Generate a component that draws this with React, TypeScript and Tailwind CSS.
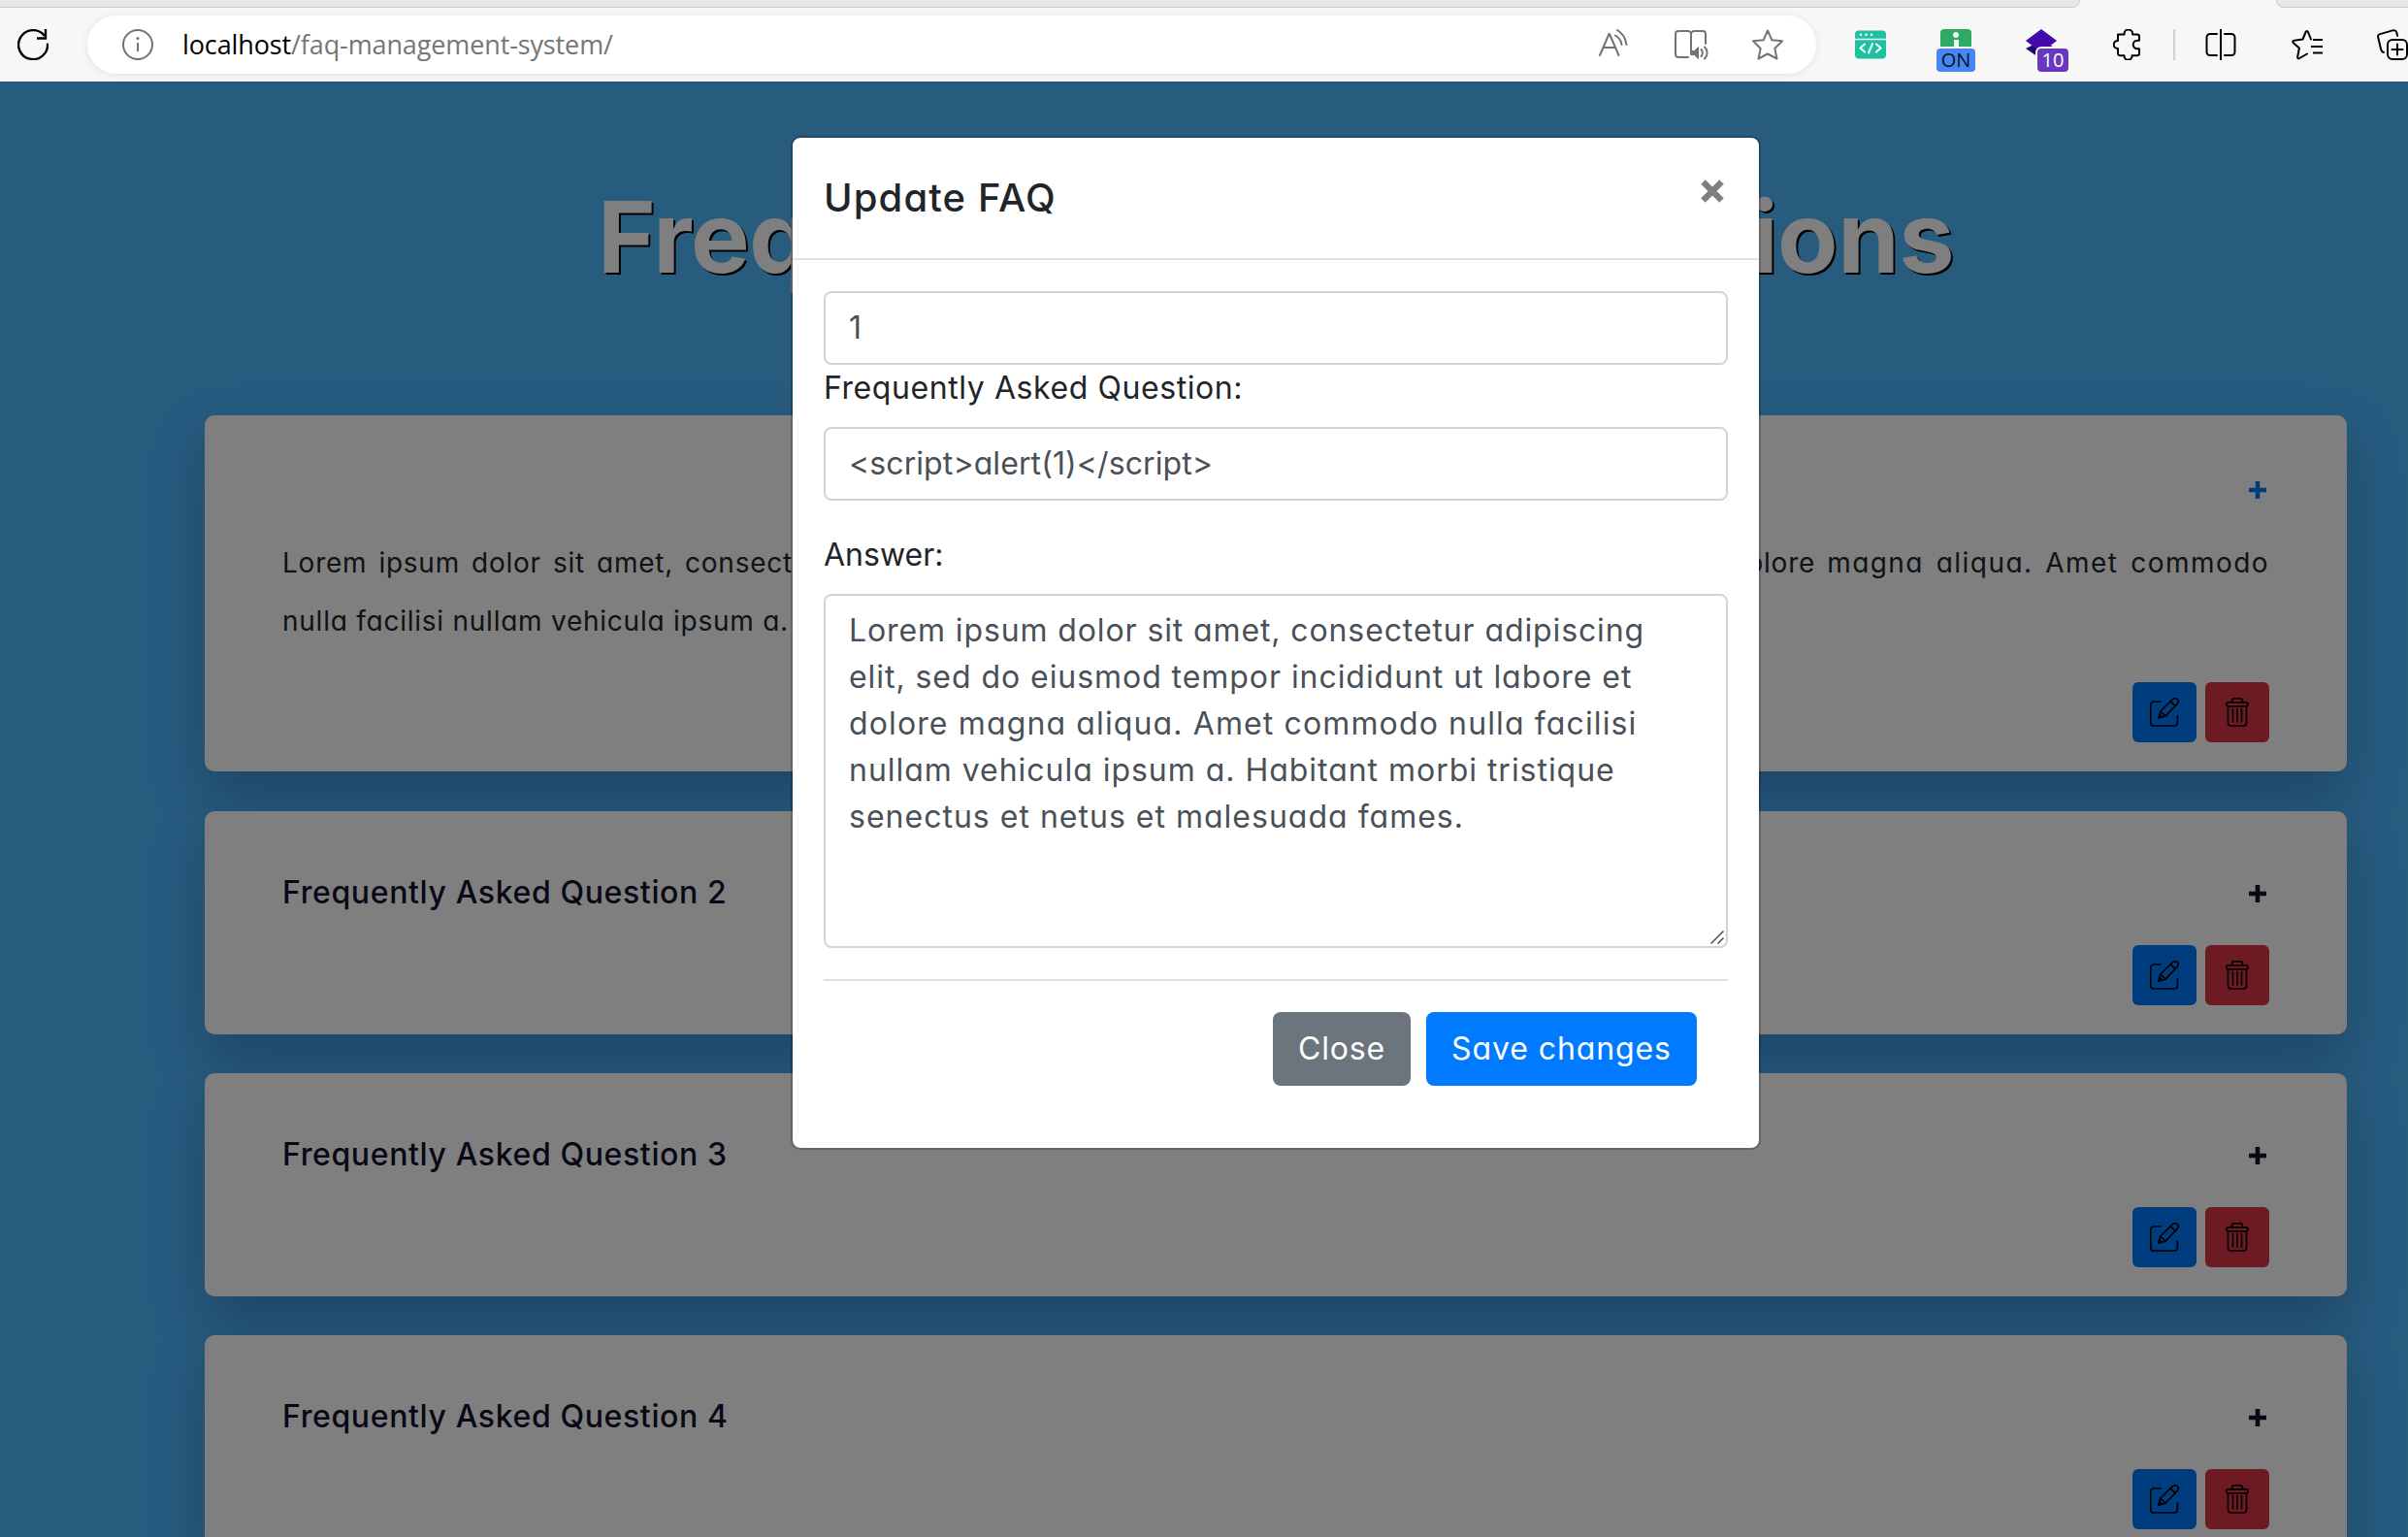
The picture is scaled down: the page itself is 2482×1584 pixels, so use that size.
import type { ReactNode } from "react";
import clsx from "clsx";

function Icon({ w, h, className, children }: { w: number; h: number; className?: string; children: ReactNode }) {
  return (
    <svg
      width={w}
      height={h}
      viewBox={`0 0 ${w} ${h}`}
      fill="none"
      stroke="currentColor"
      strokeWidth={2}
      strokeLinecap="round"
      strokeLinejoin="round"
      className={clsx("shrink-0", className)}
    >
      {children}
    </svg>
  );
}

function TabStrip() {
  return (
    <div className="flex h-2 shrink-0 bg-[#f7f7f7]">
      <div className="h-full w-[2144px] rounded-br-[8px] border-r border-b border-[#cccccc] bg-[#e8e8e8]" />
      <div className="h-full w-[202px]" />
      <div className="h-full flex-1 rounded-bl-[8px] border-b border-l border-[#cccccc] bg-[#e8e8e8]" />
    </div>
  );
}

function AddressBar() {
  return (
    <div className="ml-10 flex h-[60px] w-[1782px] shrink-0 items-center rounded-full bg-white pr-[34px] pl-9 text-[#737373] shadow-[0_1px_8px_rgba(0,0,0,0.09)]">
      <Icon w={32} h={32}>
        <circle cx="16" cy="16" r="15" />
        <path d="M16 14v9" strokeLinecap="butt" />
        <circle cx="16" cy="9.5" r="1.5" fill="currentColor" stroke="none" />
      </Icon>
      <div className="ml-[30px] font-['Open_Sans',sans-serif] text-[27px] leading-[40px] tracking-[-0.12px] whitespace-nowrap text-[#767676]">
        <span className="text-black">localhost</span>/faq-management-system/
      </div>
      <div className="ml-auto flex items-center">
        <Icon w={32} h={32}>
          <path d="M1 27 10.5 5h.5l9.500 22M5 19h12" />
          <path d="M17 6.500c3.500 2 6 5.500 6.500 9.500M19 1c5 3 8.500 8.500 9.500 15" />
        </Icon>
        <Icon w={36} h={32} className="ml-[46px]">
          <path d="M17 22V4c-1-1.300-2-2-3-2H4a3 3 0 0 0-3 3v21a3 3 0 0 0 3 3h10M17 4c1-1.300 2-2 3-2h9a3 3 0 0 1 3 3v10" />
          <path d="M17 22.500h3.500l4-4v12l-4-4H17z" fill="currentColor" strokeWidth={1} />
          <path d="M27.500 21c1.800 2 1.800 5 0 7M31 18.500c3.500 3.500 3.500 8.500 0 12" />
        </Icon>
        <Icon w={32} h={32} className="ml-11">
          <path d="M16 1.500 20.400 11.300 31 12.300 23.300 20l2.200 10.500L16 25.500l-9.500 5L8.700 20 1 12.300l10.600-1z" />
        </Icon>
      </div>
    </div>
  );
}

function BrowserBar() {
  return (
    <div className="flex h-[76px] shrink-0 items-center bg-[#f7f7f7] pl-[18px] text-black">
      <Icon w={32} h={32}>
        <path d="M31 14.500A15 15 0 1 1 28 7" strokeWidth={2.4} strokeLinecap="butt" />
        <path d="M29 0v9.500h-9" strokeWidth={2.4} strokeLinecap="butt" strokeLinejoin="miter" />
      </Icon>
      <AddressBar />
      <Icon w={32} h={30} className="ml-10">
        <rect width="32" height="29" y=".5" rx="4" fill="#1fc0a0" stroke="none" />
        <path d="M0 9.500h32" stroke="#e9f9f5" strokeWidth={1.5} />
        <g fill="#fff" stroke="none">
          <circle cx="6" cy="4.800" r="1.300" />
          <circle cx="11.500" cy="4.800" r="1.300" />
          <circle cx="17" cy="4.800" r="1.300" />
        </g>
        <path d="m10 14.500-4.500 4 4.500 4M22 14.500l4.500 4-4.500 4M18 14l-4 9.500" stroke="#fff" strokeWidth={2} />
      </Icon>
      <div className="ml-[52px] flex h-11 w-10 shrink-0 flex-col items-center self-start pt-[22px]">
        <div className="flex h-[18px] w-8 shrink-0 flex-col items-center rounded-t-[4px] bg-[#2eaa64] pt-[3px]">
          <div className="size-[6px] rounded-full bg-[#eafff2]" />
          <div className="mt-[2px] h-[7px] w-[5px] bg-[#eafff2]" />
        </div>
        <div className="mt-[2px] h-6 w-10 shrink-0 rounded-[4px] bg-[#4487f4] text-center font-['Open_Sans',sans-serif] text-[20px] leading-6 text-[#0b1020]">
          ON
        </div>
      </div>
      <div className="relative ml-[52px] h-11 w-11 shrink-0 self-start pt-[22px]">
        <Icon w={32} h={32} className="text-[#4407a8]">
          <path d="M16 12 32 20 16 31 0 20z" fill="#23056b" stroke="none" />
          <path d="M16 0 32 12 16 24 0 12z" fill="currentColor" stroke="none" />
        </Icon>
        <div className="absolute top-[40px] left-[10px] h-[28px] w-[36px] rounded-[6px] border-2 border-[#f7f7f7] bg-[#6a38c0] text-center font-['Open_Sans',sans-serif] text-[20px] leading-6 text-white">
          10
        </div>
      </div>
      <Icon w={30} h={32} className="ml-[46px]">
        <path d="M5 5.500h6.500v-.8a4.300 4.300 0 0 1 8.600 0v.8h4.700a2.200 2.200 0 0 1 2.200 2.200v4h-2a4.300 4.300 0 0 0 0 8.600h2V25a2.200 2.200 0 0 1-2.200 2.200h-5.300v.5a4 4 0 0 1-8 0v-.5H7.200A2.200 2.200 0 0 1 5 25v-5h-.3a4 4 0 0 1 0-8H5z" />
      </Icon>
      <div className="ml-8 h-8 w-[2px] shrink-0 bg-[#d1d1d1]" />
      <Icon w={32} h={32} className="ml-[31px]">
        <path d="M16 0v32" strokeLinecap="butt" />
        <path d="M12 5H5a3.500 3.500 0 0 0-3.500 3.500v15A3.500 3.500 0 0 0 5 27h7M20 5h7a3.500 3.500 0 0 1 3.500 3.500v15A3.500 3.500 0 0 1 27 27h-7" />
      </Icon>
      <Icon w={32} h={32} className="ml-[57px]">
        <path d="M22 11h10M20 18h12M22 24.500h10" strokeLinecap="butt" />
        <path d="M20 10.500 17 3c-.6-1.400-1.800-1.400-2.400 0l-3.100 7.500-8.700 1.200c-1.700.2-2.100 1.400-.9 2.500l6 5.300-1.700 9c-.3 1.700.7 2.300 2 1.500L16 25.500" />
      </Icon>
      <Icon w={32} h={32} className="ml-14">
        <path d="M7 24c-1.600-.4-2.300-1.300-2.700-2.600L1.200 8.600C.7 6.800 1.400 5.600 3.200 5.100l13-3.700c2-.6 3.400 0 4 1.800l1 3.800" />
        <rect x="11" y="11" width="20" height="20" rx="5" />
        <path d="M21 15.500v11M15.500 21h11" />
      </Icon>
    </div>
  );
}

function Plus({ className }: { className: string }) {
  return (
    <svg width={18} height={18} viewBox="0 0 18 18" className={clsx("mt-px mr-[3px] shrink-0", className)}>
      <path d="M9 0v18M0 9h18" stroke="currentColor" strokeWidth={4.6} />
    </svg>
  );
}

function CardActions() {
  return (
    <div className="flex justify-end gap-[9px] text-black">
      <button className="flex h-[62px] w-[66px] items-center justify-center rounded-[6px] bg-[#007bff]">
        <Icon w={30} h={30}>
          <g strokeWidth={1.7}>
            <path d="M11 4H4a3.200 3.200 0 0 0-3.200 3.200v18.600A3.200 3.200 0 0 0 4 29h21.200a3.200 3.200 0 0 0 3.200-3.200V19" />
            <path d="M8.800 21.200l2-7.200L23.500 1.700a3.300 3.300 0 0 1 4.700 4.700L16 19.200z" />
            <path d="M21.300 3.800l4.800 4.800M10.800 14l5.200 5.200M10 17.500l2.500 2.600" />
          </g>
        </Icon>
      </button>
      <button className="flex h-[62px] w-[66px] items-center justify-center rounded-[6px] bg-[#dc3545]">
        <Icon w={24} h={30}>
          <g strokeWidth={1.7}>
            <rect x=".9" y="4.800" width="22.200" height="4" rx="2" />
            <path d="M6.500 4.800V3.500C6.500 2 7.500.9 9 .9h6c1.500 0 2.500 1.100 2.500 2.600v1.300" />
            <path d="M2.500 8.800V26a3 3 0 0 0 3 3h13a3 3 0 0 0 3-3V8.800M7.500 11.500V25M12 11.500V25M16.500 11.500V25" />
          </g>
        </Icon>
      </button>
    </div>
  );
}

const cardBase =
  "rounded-[10px] bg-white pb-[30px] pl-[80px] pr-20 shadow-[0_25px_55px_rgba(8,4,60,0.25)]";

function OpenCard() {
  return (
    <section className={clsx(cardBase, "h-[367px] pt-[46px]")}>
      <div className="flex h-[60px] items-center justify-end">
        <Plus className="text-[#007bec]" />
      </div>
      <div className="mt-4 text-[28px] leading-[60px] tracking-[0.027em] whitespace-nowrap text-[#212529]">
        <p className="[text-align-last:justify]">
          Lorem ipsum dolor sit amet, consectetur adipiscing elit, sed do eiusmod tempor incididunt ut labore et dolore{" "}
          <span className="tracking-[0.052em]">magna aliqua. Amet commodo</span>
        </p>
        <p>nulla facilisi nullam vehicula ipsum a. Habitant morbi tristique senectus et netus et malesuada fames.</p>
      </div>
      <div className="mt-[33px]">
        <CardActions />
      </div>
    </section>
  );
}

function ClosedCard({ n, className }: { n: number; className: string }) {
  return (
    <section className={clsx(cardBase, "h-[230px] pt-[54px]", className)}>
      <div className="flex h-[60px] items-center justify-between text-[#10102d]">
        <h2 className="text-[32px] leading-[60px] font-medium tracking-[0.0195em] whitespace-nowrap">
          Frequently Asked Question {n}
        </h2>
        <Plus className="text-[#10102d]" />
      </div>
      <div className="mt-6">
        <CardActions />
      </div>
    </section>
  );
}

const answerLines = [
  { text: "Lorem ipsum dolor sit amet, consectetur adipiscing", cls: "tracking-[0.0277em]" },
  { text: "elit, sed do eiusmod tempor incididunt ut labore et", cls: "tracking-[0.0295em]" },
  { text: "dolore magna aliqua. Amet commodo nulla facilisi", cls: "tracking-[0.0352em]" },
  { text: "nullam vehicula ipsum a. Habitant morbi tristique", cls: "tracking-[0.0303em]" },
  { text: "senectus et netus et malesuada fames.", cls: "tracking-[0.0315em]" },
];

const field = "rounded-[8px] border-2 border-[#ced4da] px-6 text-[32px] text-[#495057]";

function UpdateModal() {
  return (
    <div className="w-[1000px] rounded-[10px] border-2 border-black/20 bg-white bg-clip-padding text-[#212529]">
      <header className="flex h-[126px] items-center justify-between border-b-2 border-[#dee2e6] px-8">
        <h5 className="text-[40px] leading-[60px] font-medium tracking-[0.028em]">Update FAQ</h5>
        <svg width={24} height={24} viewBox="0 0 24 24" className="mr-[4px] mb-[15px] text-[#7f7f7f]">
          <path d="m2.500 2.500 19 19M21.500 2.500l-19 19" stroke="currentColor" strokeWidth={6.4} />
        </svg>
      </header>
      <div className="flex flex-col p-8 text-[32px] leading-[48px]">
        <div className={clsx(field, "flex h-[76px] items-center")}>1</div>
        <label className="tracking-[0.018em]">Frequently Asked Question:</label>
        <div className={clsx(field, "mt-4 flex h-[76px] items-center tracking-[0.003em]")}>
          {"<script>alert(1)</script>"}
        </div>
        <label className="mt-8">Answer:</label>
        <div className={clsx(field, "relative mt-4 h-[365px] pt-3")}>
          {answerLines.map((l) => (
            <p key={l.text} className={clsx("whitespace-nowrap", l.cls)}>
              {l.text}
            </p>
          ))}
          <svg width={16} height={16} viewBox="0 0 16 16" className="absolute right-[1px] bottom-[1px] text-[#555]">
            <path d="M1.500 14.500 14.500 1.500M8.500 14.500l6-6" stroke="currentColor" strokeWidth={1.6} />
          </svg>
        </div>
        <footer className="mt-8 flex justify-end gap-4 border-t-2 border-[#dee2e6] p-8 pb-8 text-white">
          <button className="h-[76px] w-[142px] rounded-[8px] bg-[#6c757d] tracking-[0.025em]">Close</button>
          <button className="h-[76px] w-[279px] rounded-[8px] bg-[#007bff] tracking-[0.028em]">Save changes</button>
        </footer>
      </div>
    </div>
  );
}

export default function App() {
  return (
    <div className="flex h-[1584px] w-[2482px] flex-col overflow-hidden font-['Inter',sans-serif] [font-feature-settings:'cv11']">
      <TabStrip />
      <BrowserBar />
      <div className="relative h-[1500px] overflow-hidden bg-[#4eb8ff]">
        <main className="ml-[211px] flex w-[2208px] flex-col pt-[100px]">
          <h1 className="mb-[124px] text-center text-[102px] leading-[120px] font-bold tracking-[-0.4px] text-white [text-shadow:2px_2px_0_#000]">
            Frequently Asked Questions
          </h1>
          <OpenCard />
          <ClosedCard n={2} className="mt-[41px]" />
          <ClosedCard n={3} className="mt-10" />
          <ClosedCard n={4} className="mt-10" />
        </main>
        <div className="absolute inset-0 flex items-start bg-black/50 pt-14 pl-[815px]">
          <UpdateModal />
        </div>
      </div>
    </div>
  );
}
